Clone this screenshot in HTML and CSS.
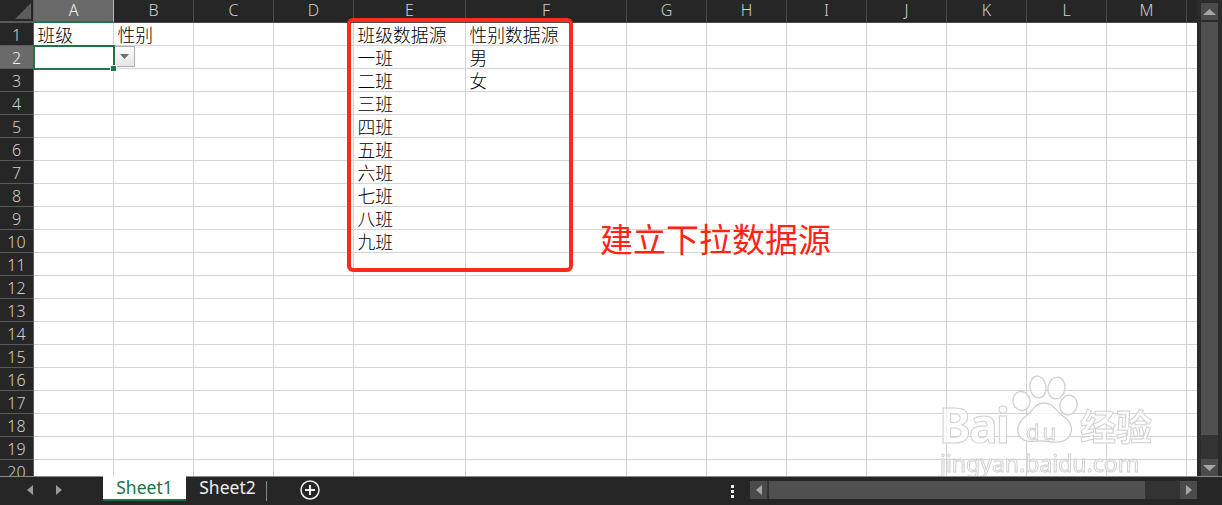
FILE: index.html
```html
<!DOCTYPE html>
<html lang="zh-CN">
<head>
<meta charset="utf-8">
<title>Sheet1</title>
<link rel="stylesheet" href="styles.css">
</head>
<body>
<div class="app">
  <div class="main">
    <div class="sheet">
      <div class="row head">
        <div class="rh corner"><svg class="corner-tri" width="16" height="16" viewBox="0 0 16 16"><path d="M16 0V16H0Z"/></svg></div>
        <div class="ch on">A</div><div class="ch">B</div><div class="ch">C</div><div class="ch">D</div><div class="ch">E</div><div class="ch">F</div><div class="ch">G</div><div class="ch">H</div><div class="ch">I</div><div class="ch">J</div><div class="ch">K</div><div class="ch">L</div><div class="ch">M</div><div class="ch"></div>
      </div>
      <div class="row"><div class="rh">1</div><div class="c">班级</div><div class="c">性别</div><div class="c"></div><div class="c"></div><div class="c">班级数据源</div><div class="c">性别数据源</div><div class="c"></div><div class="c"></div><div class="c"></div><div class="c"></div><div class="c"></div><div class="c"></div><div class="c"></div><div class="c"></div></div>
      <div class="row"><div class="rh on">2</div><div class="c sel"><i class="handle"></i></div><div class="c"><span class="dd"><svg width="9" height="5" viewBox="0 0 9 5"><path d="M0 0H9L4.500 5Z"/></svg></span></div><div class="c"></div><div class="c"></div><div class="c">一班</div><div class="c">男</div><div class="c"></div><div class="c"></div><div class="c"></div><div class="c"></div><div class="c"></div><div class="c"></div><div class="c"></div><div class="c"></div></div>
      <div class="row"><div class="rh">3</div><div class="c"></div><div class="c"></div><div class="c"></div><div class="c"></div><div class="c">二班</div><div class="c">女</div><div class="c"></div><div class="c"></div><div class="c"></div><div class="c"></div><div class="c"></div><div class="c"></div><div class="c"></div><div class="c"></div></div>
      <div class="row"><div class="rh">4</div><div class="c"></div><div class="c"></div><div class="c"></div><div class="c"></div><div class="c">三班</div><div class="c"></div><div class="c"></div><div class="c"></div><div class="c"></div><div class="c"></div><div class="c"></div><div class="c"></div><div class="c"></div><div class="c"></div></div>
      <div class="row"><div class="rh">5</div><div class="c"></div><div class="c"></div><div class="c"></div><div class="c"></div><div class="c">四班</div><div class="c"></div><div class="c"></div><div class="c"></div><div class="c"></div><div class="c"></div><div class="c"></div><div class="c"></div><div class="c"></div><div class="c"></div></div>
      <div class="row"><div class="rh">6</div><div class="c"></div><div class="c"></div><div class="c"></div><div class="c"></div><div class="c">五班</div><div class="c"></div><div class="c"></div><div class="c"></div><div class="c"></div><div class="c"></div><div class="c"></div><div class="c"></div><div class="c"></div><div class="c"></div></div>
      <div class="row"><div class="rh">7</div><div class="c"></div><div class="c"></div><div class="c"></div><div class="c"></div><div class="c">六班</div><div class="c"></div><div class="c"></div><div class="c"></div><div class="c"></div><div class="c"></div><div class="c"></div><div class="c"></div><div class="c"></div><div class="c"></div></div>
      <div class="row"><div class="rh">8</div><div class="c"></div><div class="c"></div><div class="c"></div><div class="c"></div><div class="c">七班</div><div class="c"></div><div class="c"></div><div class="c"></div><div class="c"></div><div class="c"></div><div class="c"></div><div class="c"></div><div class="c"></div><div class="c"></div></div>
      <div class="row"><div class="rh">9</div><div class="c"></div><div class="c"></div><div class="c"></div><div class="c"></div><div class="c">八班</div><div class="c"></div><div class="c"></div><div class="c"></div><div class="c"></div><div class="c"></div><div class="c"></div><div class="c"></div><div class="c"></div><div class="c"></div></div>
      <div class="row"><div class="rh">10</div><div class="c"></div><div class="c"></div><div class="c"></div><div class="c"></div><div class="c">九班</div><div class="c"></div><div class="c"></div><div class="c"></div><div class="c"></div><div class="c"></div><div class="c"></div><div class="c"></div><div class="c"></div><div class="c"></div></div>
      <div class="row"><div class="rh">11</div><div class="c"></div><div class="c"></div><div class="c"></div><div class="c"></div><div class="c"></div><div class="c"></div><div class="c"></div><div class="c"></div><div class="c"></div><div class="c"></div><div class="c"></div><div class="c"></div><div class="c"></div><div class="c"></div></div>
      <div class="row"><div class="rh">12</div><div class="c"></div><div class="c"></div><div class="c"></div><div class="c"></div><div class="c"></div><div class="c"></div><div class="c"></div><div class="c"></div><div class="c"></div><div class="c"></div><div class="c"></div><div class="c"></div><div class="c"></div><div class="c"></div></div>
      <div class="row"><div class="rh">13</div><div class="c"></div><div class="c"></div><div class="c"></div><div class="c"></div><div class="c"></div><div class="c"></div><div class="c"></div><div class="c"></div><div class="c"></div><div class="c"></div><div class="c"></div><div class="c"></div><div class="c"></div><div class="c"></div></div>
      <div class="row"><div class="rh">14</div><div class="c"></div><div class="c"></div><div class="c"></div><div class="c"></div><div class="c"></div><div class="c"></div><div class="c"></div><div class="c"></div><div class="c"></div><div class="c"></div><div class="c"></div><div class="c"></div><div class="c"></div><div class="c"></div></div>
      <div class="row"><div class="rh">15</div><div class="c"></div><div class="c"></div><div class="c"></div><div class="c"></div><div class="c"></div><div class="c"></div><div class="c"></div><div class="c"></div><div class="c"></div><div class="c"></div><div class="c"></div><div class="c"></div><div class="c"></div><div class="c"></div></div>
      <div class="row"><div class="rh">16</div><div class="c"></div><div class="c"></div><div class="c"></div><div class="c"></div><div class="c"></div><div class="c"></div><div class="c"></div><div class="c"></div><div class="c"></div><div class="c"></div><div class="c"></div><div class="c"></div><div class="c"></div><div class="c"></div></div>
      <div class="row"><div class="rh">17</div><div class="c"></div><div class="c"></div><div class="c"></div><div class="c"></div><div class="c"></div><div class="c"></div><div class="c"></div><div class="c"></div><div class="c"></div><div class="c"></div><div class="c"></div><div class="c"></div><div class="c"></div><div class="c"></div></div>
      <div class="row"><div class="rh">18</div><div class="c"></div><div class="c"></div><div class="c"></div><div class="c"></div><div class="c"></div><div class="c"></div><div class="c"></div><div class="c"></div><div class="c"></div><div class="c"></div><div class="c"></div><div class="c"></div><div class="c"></div><div class="c"></div></div>
      <div class="row"><div class="rh">19</div><div class="c"></div><div class="c"></div><div class="c"></div><div class="c"></div><div class="c"></div><div class="c"></div><div class="c"></div><div class="c"></div><div class="c"></div><div class="c"></div><div class="c"></div><div class="c"></div><div class="c"></div><div class="c"></div></div>
      <div class="row"><div class="rh">20</div><div class="c"></div><div class="c"></div><div class="c"></div><div class="c"></div><div class="c"></div><div class="c"></div><div class="c"></div><div class="c"></div><div class="c"></div><div class="c"></div><div class="c"></div><div class="c"></div><div class="c"></div><div class="c"></div></div>

      <div class="redbox"></div>
      <div class="note">建立下拉数据源</div>
      <div class="wm">
        <svg class="paw" width="66" height="69" viewBox="0 0 66 69">
          <g fill="#fff" fill-opacity=".72" stroke="#d0d0d0" stroke-width="1.300">
            <ellipse cx="9.500" cy="26" rx="8.500" ry="9.500" transform="rotate(-12 9.500 26)"/>
            <ellipse cx="26" cy="12" rx="8" ry="11" transform="rotate(-8 26 12)"/>
            <ellipse cx="44.500" cy="13" rx="8.500" ry="11" transform="rotate(8 44.500 13)"/>
            <ellipse cx="56.500" cy="30" rx="8.500" ry="10" transform="rotate(14 56.500 30)"/>
            <path d="M32 28C41 28 44 36 51 41C60 47 62 56 56 63C50 69 40 67 32 66C24 65 15 69 9 63C3 56 6 47 14 41C21 36 23 28 32 28Z"/>
          </g>
        </svg>
        <span class="wm-bai">Bai</span>
        <span class="wm-du">du</span>
        <span class="wm-cn">经验</span>
        <span class="wm-url">jingyan.baidu.com</span>
      </div>
    </div>
    <div class="vscroll">
      <div class="vbtn"><svg width="13" height="6" viewBox="0 0 13 6"><path d="M6.500 0L13 6H0Z"/></svg></div>
      <div class="vtrack"><div class="vthumb"></div></div>
      <div class="vbtn"><svg width="13" height="6" viewBox="0 0 13 6"><path d="M0 0H13L6.500 6Z"/></svg></div>
    </div>
  </div>
  <div class="tabbar">
    <div class="navs">
      <svg width="6" height="10" viewBox="0 0 6 10"><path d="M6 0V10L0 5Z"/></svg>
      <svg width="6" height="10" viewBox="0 0 6 10"><path d="M0 0V10L6 5Z"/></svg>
    </div>
    <div class="tab active">Sheet1</div>
    <div class="tab">Sheet2</div>
    <div class="tabsep"></div>
    <svg class="addsheet" width="20" height="20" viewBox="0 0 20 20"><circle cx="10" cy="10" r="9" fill="none" stroke="#f0f0f0" stroke-width="1.500"/><path d="M10 5V15M5 10H15" stroke="#f0f0f0" stroke-width="2"/></svg>
    <div class="dots"><i></i><i></i><i></i></div>
    <div class="hscroll">
      <div class="hbtn"><svg width="6" height="10" viewBox="0 0 6 10"><path d="M6 0V10L0 5Z"/></svg></div>
      <div class="hthumb"></div>
      <div class="hbtn"><svg width="6" height="10" viewBox="0 0 6 10"><path d="M0 0V10L6 5Z"/></svg></div>
    </div>
  </div>
</div>
</body>
</html>
```
FILE: styles.css
```css
* { box-sizing: border-box; }
html, body { margin: 0; height: 100%; overflow: hidden; background: #262626; }
.app {
  width: 1222px; height: 505px; display: flex; flex-direction: column;
  font-family: "Noto Sans CJK SC", "Noto Sans", sans-serif;
}
.main { flex: 0 0 476px; display: flex; min-height: 0; }
.sheet { position: relative; width: 1197px; height: 476px; overflow: hidden; background: #fff; }
.row {
  display: grid; height: 23px; grid-template-rows: 23px;
  grid-template-columns: 34px 80px 80px 80px 80px 112px 161px 80px 80px 80px 80px 80px 80px 80px 80px;
}
.rh {
  background: #262626; color: #cfcfcf; font-family: "Noto Sans", sans-serif; font-size: 16px; line-height: 24px; text-align: center;
  border-bottom: 1px solid #5a5a5a; border-right: 1px solid #5a5a5a; font-weight: 300;
}
.rh.on { background: #6a6a6a; color: #f4f4f4; }
.corner { position: relative; border-bottom: 2px solid #5a5a5a; }
.corner-tri { position: absolute; right: 2px; bottom: 2px; }
.corner-tri path { fill: #5c5c5c; }
.ch {
  background: #262626; color: #cfcfcf; font-family: "Noto Sans", sans-serif; font-size: 16px; line-height: 21px; text-align: center;
  border-right: 1px solid #4a4a4a; border-bottom: 1px solid #4a4a4a; font-weight: 300;
}
.ch.on { background: #6a6a6a; color: #f4f4f4; border-bottom: 2px solid #217346; border-right-color: #b8b8b8; }
.c {
  position: relative; border-right: 1px solid #d4d4d4; border-bottom: 1px solid #d4d4d4;
  font-size: 17.8px; line-height: 22px; font-weight: 300; color: #000; padding-left: 3.500px; white-space: nowrap;
}
.sel { z-index: 2; outline: 2px solid #217346; outline-offset: -1px; }
.handle { position: absolute; right: -3px; bottom: -3px; width: 5px; height: 5px; background: #217346; box-shadow: 0 0 0 1px #fff; }
.dd {
  position: absolute; left: 0; top: 0; width: 21px; height: 21px; background: linear-gradient(#fbfbfb, #e6e6e6);
  border: 1px solid #aab0b8; display: flex; align-items: center; justify-content: center;
}
.dd path { fill: #6e6e6e; }
.redbox { position: absolute; left: 347px; top: 18px; width: 226px; height: 254px; border: 4px solid #ff2a1c; border-radius: 6px; z-index: 3; }
.note { position: absolute; left: 600px; top: 214px; font-size: 33px; line-height: 48px; color: #ff2416; font-weight: 400; z-index: 3; white-space: nowrap; }
.wm { position: absolute; left: 935px; top: 372px; width: 240px; height: 104px; z-index: 3; filter: blur(.4px); }
.paw { position: absolute; left: 77px; top: 3px; }
.wm span { position: absolute; color: rgba(255,255,255,.72); -webkit-text-stroke: 1px #d0d0d0; font-family: "Noto Sans", sans-serif; white-space: nowrap; }
.wm .wm-bai { left: 4px; top: 23px; font-size: 48px; line-height: 60px; font-weight: 700; letter-spacing: -2px; }
.wm .wm-du { left: 91px; top: 43px; font-size: 22px; line-height: 32px; letter-spacing: 3px; }
.wm .wm-cn { left: 145px; top: 33px; font-size: 36px; line-height: 40px; font-family: "Noto Sans CJK SC", sans-serif; font-weight: 700; }
.wm .wm-url { left: 5px; top: 78px; font-size: 23px; line-height: 26px; }

.vscroll { flex: 1; background: #2b2b2b; padding: 3px 4px 0; display: flex; flex-direction: column; }
.vbtn { flex: 0 0 17px; background: #4b4b4b; display: flex; align-items: center; justify-content: center; }
.vbtn path { fill: #a6a6a6; }
.vtrack { flex: 1; background: #333; margin: 2px 0 0; padding-bottom: 24px; display: flex; }
.vthumb { flex: 1; background: #505050; }

.tabbar { flex: 0 0 29px; display: flex; align-items: flex-start; background: #262626; border-top: 1px solid #8a8a8a; }
.navs { width: 103px; height: 28px; padding: 8px 0 0 27px; display: flex; gap: 23px; align-items: flex-start; }
.navs path { fill: #9a9a9a; }
.tab { width: 83px; height: 24px; text-align: center; font-size: 17.500px; line-height: 20px; color: #eee; font-weight: 400; font-family: "Noto Sans", sans-serif; }
.tab.active { background: #fff; color: #217346; border-bottom: 2px solid #217346; height: 25px; margin-top: -1px; line-height: 22px; }
.tabsep { width: 1px; height: 20px; background: #8a8a8a; margin: 4px 0 0 -3px; }
.addsheet { margin: 3px 0 0 33px; }
.dots { width: 4px; margin: 8px 0 0 411px; display: flex; flex-direction: column; gap: 2px; }
.dots i { display: block; width: 3px; height: 3px; background: #eee; }
.hscroll { width: 447px; height: 18px; margin: 4px 0 0 15px; background: #333; display: flex; }
.hbtn { width: 17px; background: #4b4b4b; display: flex; align-items: center; justify-content: center; }
.hbtn path { fill: #a6a6a6; }
.hthumb { width: 376px; margin-left: 2px; margin-right: 35px; background: #505050; }
```
